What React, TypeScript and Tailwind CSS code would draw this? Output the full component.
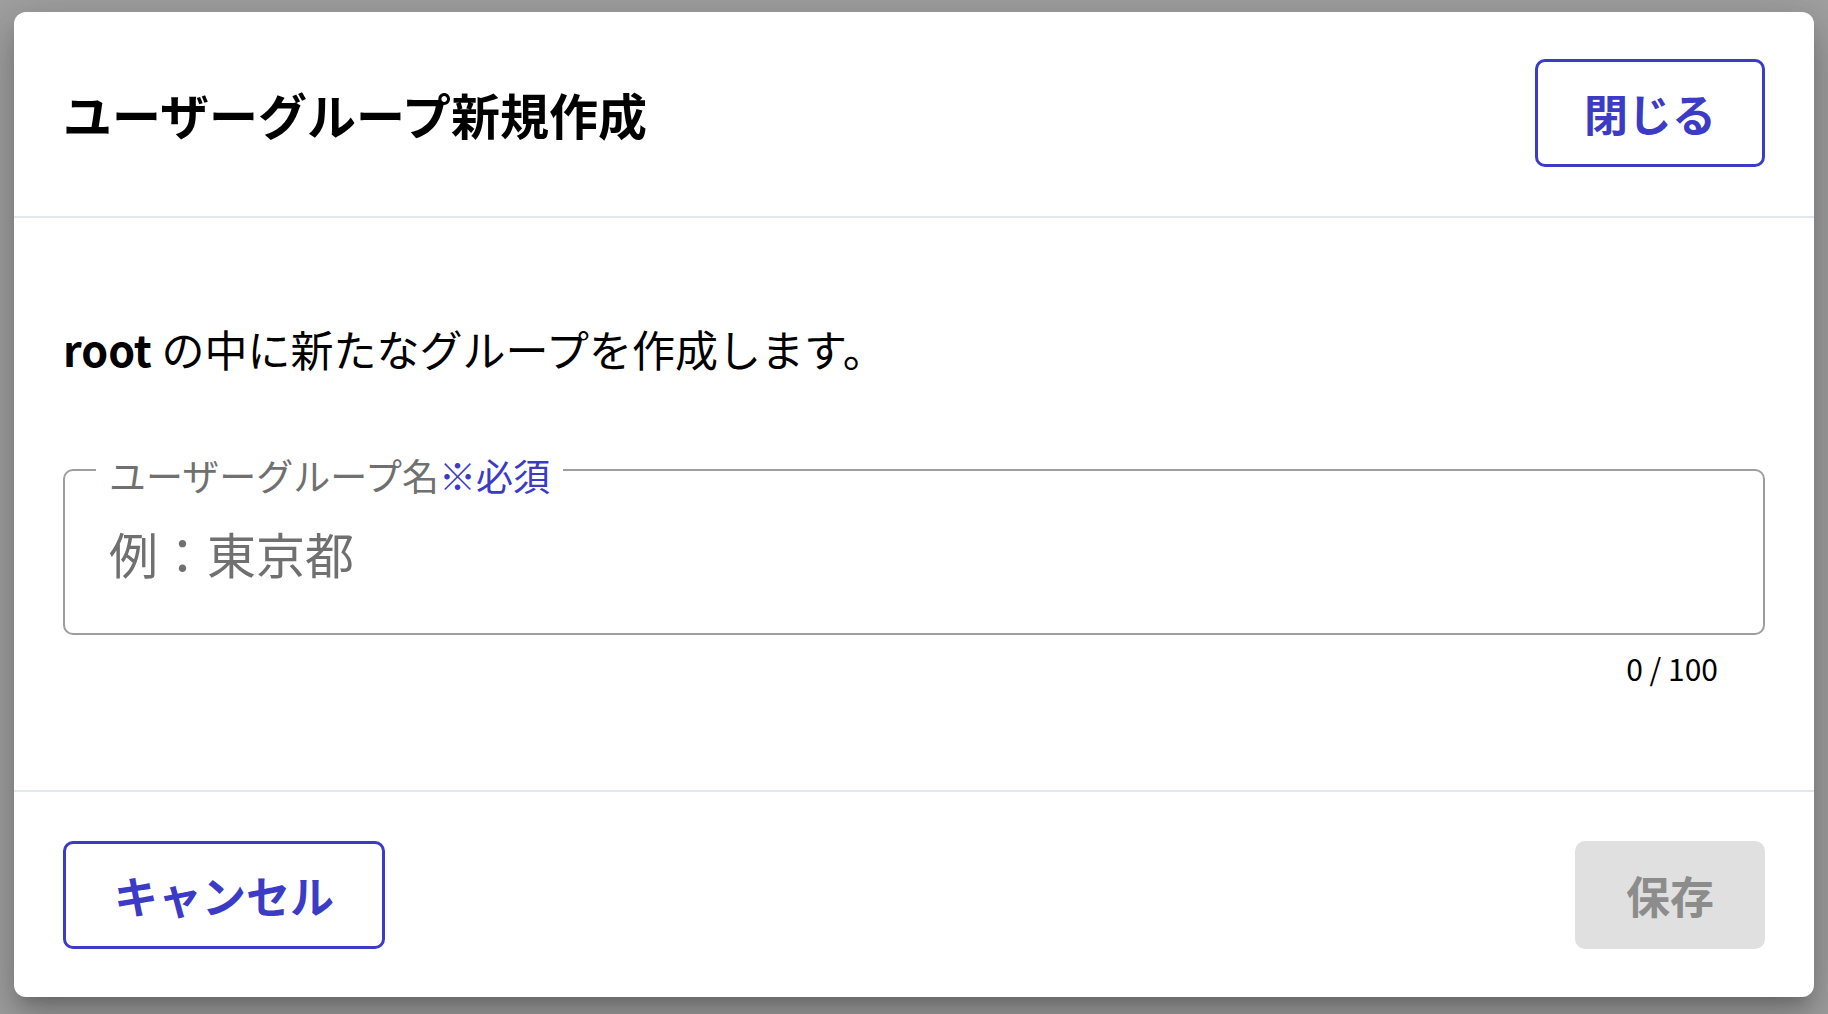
import { useState } from 'react';

export default function App() {
  const [name, setName] = useState('');

  return (
    <div className="h-screen w-screen overflow-hidden bg-[#a0a0a0] px-[14px] pt-[12px] font-['Noto_Sans_CJK_JP',sans-serif] text-black">
      <div className="flex h-[985px] flex-col rounded-[12px] bg-white shadow-[0_11px_15px_-7px_rgba(0,0,0,0.2),0_24px_38px_3px_rgba(0,0,0,0.14),0_9px_46px_8px_rgba(0,0,0,0.12)]">
        {/* header */}
        <div className="flex h-[206px] shrink-0 items-center justify-between border-b-2 border-[#e3e8ef] px-[49px] pb-[2px]">
          <h2 className="text-[49px] font-bold leading-none">ユーザーグループ新規作成</h2>
          <button className="flex h-[108px] items-center rounded-[10px] border-[3px] border-[#3b3bc6] px-[46px] text-[44px] font-bold leading-none text-[#3b3bc6]">
            閉じる
          </button>
        </div>

        {/* body */}
        <div className="flex flex-1 flex-col px-[49px] pt-[109px]">
          <p className="text-[43px] leading-none">
            <span className="font-bold">root</span> の中に新たなグループを作成します。
          </p>

          <div className="relative mt-[99px] flex h-[166px] items-center rounded-[10px] border-2 border-[#9e9e9e] pl-[44px]">
            <label className="absolute left-[31px] top-[-14px] bg-white px-[13px] text-[37px] leading-none text-[#707070]">
              ユーザーグループ名<span className="text-[#3b3bc6]">※必須</span>
            </label>
            <input
              value={name}
              onChange={(e) => setName(e.target.value)}
              maxLength={100}
              placeholder="例：東京都"
              className="w-full bg-transparent text-[49px] leading-none outline-none placeholder:text-[#707070]"
            />
          </div>
          <div className="mt-[18px] pr-[47px] text-right text-[30px] leading-none">
            {name.length} / 100
          </div>
        </div>

        {/* footer */}
        <div className="flex h-[207px] shrink-0 items-start justify-between border-t-2 border-[#e3e8ef] px-[49px] pt-[49px]">
          <button className="flex h-[108px] items-center rounded-[10px] border-[3px] border-[#3b3bc6] px-12 text-[44px] font-bold leading-none text-[#3b3bc6]">
            キャンセル
          </button>
          <button
            disabled
            className="flex h-[108px] items-center rounded-[10px] border-[3px] border-transparent bg-[#e0e0e0] px-12 text-[44px] font-bold leading-none text-[#8c8c8c]"
          >
            保存
          </button>
        </div>
      </div>
    </div>
  );
}
